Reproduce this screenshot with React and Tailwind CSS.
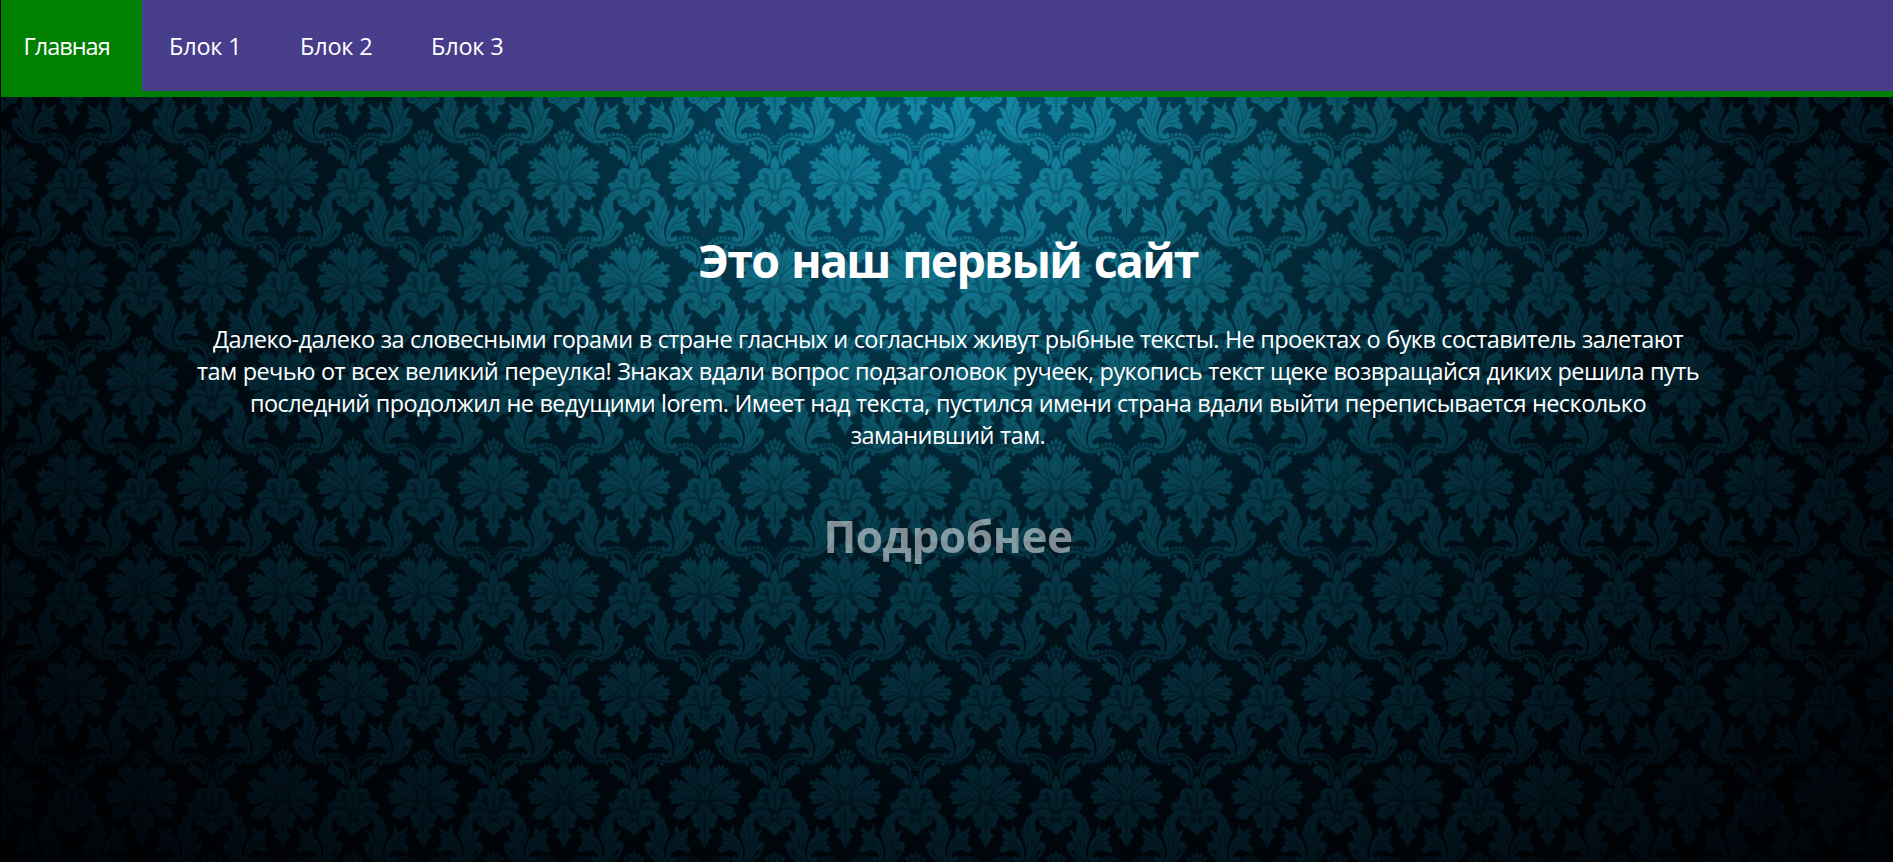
import React from "react";

const NAV = ["Блок 1", "Блок 2", "Блок 3"];

function HalfMotif() {
  return (
    <g>
      {/* scrolled ornament */}
      <path d="M0 200L14 216L34 214L52 244L78 262L66 300L30 330L0 350Z" fill="#7a7a7a" />
      <g fill="#fff">
        <path d="M0 174C5 184 14 192 14 205C14 212 10 216 7 220L0 232Z" />
        <path d="M0 278L0 238C6 222 16 213 30 213C44 213 54 226 50 240C47 251 33 252 30 243C29 237 35 233 38 237C38 227 28 224 22 232C14 244 22 256 12 276Z" />
        <path d="M20 272C24 260 34 252 46 254C44 246 52 241 58 246C58 252 56 256 60 260C66 252 76 256 82 266C76 264 72 268 76 276C66 284 56 272 44 270C34 268 28 276 22 282Z" />
        <path d="M14 288C22 274 40 272 54 278C76 286 92 304 86 330C78 346 66 350 58 346C64 332 66 312 56 302C46 292 32 298 32 308C34 314 44 312 44 304C54 312 48 328 34 330C18 332 6 312 14 288Z" />
        <path d="M0 312C10 316 14 328 26 332C22 342 14 338 12 346C8 352 4 350 0 358Z" />
        <circle cx="0" cy="299" r="7" />
      </g>
      {/* acanthus branch */}
      <g fill="#fff">
        <path d="M90 298C70 313 56 334 61 352C52 343 42 338 36 340C48 352 46 364 55 378C45 370 30 373 31 389C34 402 46 404 54 398C60 420 78 438 102 440C92 425 88 410 90 395C94 375 104 362 108 338C101 345 95 341 101 324C94 326 92 316 90 298Z" />
        <path d="M97 427C92 398 100 372 120 356C134 346 146 346 164 328C166 340 158 346 156 352C164 352 168 356 150 370C158 368 166 374 153 384C162 384 172 392 168 404C160 410 150 404 142 400C130 396 112 404 109 414C106 422 116 426 122 416C130 416 132 428 122 434C112 438 100 436 97 427Z" />
        <path d="M120 352C120 340 122 330 128 322C132 332 130 342 138 340L134 350Z" />
      </g>
      <path d="M38 398C56 430 82 442 104 444C128 446 142 432 160 434C184 438 196 460 196 482C197 498 190 508 184 514" fill="none" stroke="#fff" strokeWidth="10" strokeOpacity=".85" />
      <path d="M110 432C126 434 138 420 158 422C188 424 204 446 207 470" fill="none" stroke="#fff" strokeWidth="11" strokeOpacity=".8" strokeDasharray="9 3" />
      <path d="M50 414C66 440 90 454 112 456" fill="none" stroke="#fff" strokeWidth="3" strokeDasharray="3 3" />
      <g fill="#fff">
        <path d="M184 470C174 460 166 462 160 456C150 450 144 452 148 460C138 456 132 464 140 470C132 476 138 484 150 480C150 488 156 492 162 486C160 498 166 504 172 494C178 500 176 508 182 512C188 496 190 482 184 470Z" />
        <circle cx="128" cy="451" r="6" />
        <circle cx="146" cy="448" r="6" />
      </g>
      {/* flower */}
      <g transform="translate(0 405)">
        <path d="M0 46L20 66L54 66L60 84L44 118L72 124L86 146L60 170L74 196L50 192L30 216L14 236L0 262Z" fill="#8a8a8a" />
        <path d="M0 6L14 14L28 24L24 46L0 60Z" fill="#666" />
        <g fill="#fff">
          <path d="M0 -4C6 3 7 11 0 17Z" />
          <ellipse cx="12" cy="12" rx="5" ry="7" transform="rotate(25 12 12)" />
          <ellipse cx="25" cy="21" rx="5" ry="7" transform="rotate(35 25 21)" />
          <ellipse cx="7" cy="28" rx="5" ry="8" transform="rotate(15 7 28)" />
          <ellipse cx="19" cy="36" rx="5" ry="8" transform="rotate(30 19 36)" />
          <path d="M0 38C8 46 15 60 18 70C22 78 20 92 12 108L0 118Z" />
          <path d="M14 124C14 106 26 96 24 72C24 60 28 56 32 52C34 58 36 59 38 58C38 48 42 44 45 44C47 50 46 55 48 58C52 48 56 47 60 50C58 57 57 60 60 62C66 55 70 57 73 61C68 66 66 68 67 72C72 69 77 73 76 79C64 82 56 88 50 98C42 112 28 116 20 128Z" />
          <path d="M0 152C-1 134 4 122 12 120C18 132 12 146 6 156L0 162Z" />
          <path d="M18 148C22 126 42 112 62 98C70 92 75 94 76 102C80 96 79 89 84 87C91 88 92 96 88 102C95 95 104 94 108 99C106 107 98 109 92 110C102 111 104 117 96 120C90 121 86 119 82 118C88 124 86 128 92 130C100 126 108 132 104 139C112 142 112 150 102 151C98 151 96 156 103 161C101 169 92 167 85 164C80 168 72 165 64 158C50 152 42 146 30 156Z" />
          <path d="M22 164C36 154 54 158 66 170C76 172 86 174 89 182C82 184 82 188 94 194C100 202 92 208 84 204C84 214 76 216 70 212C62 218 58 208 54 200C50 206 42 196 36 178C32 172 26 170 22 164Z" />
          <path d="M0 168C8 164 14 172 16 182C20 194 34 192 38 202C42 212 36 222 28 222C34 228 38 232 32 236C28 232 28 240 22 242C18 238 16 234 14 242C12 252 18 258 25 262C22 272 14 266 12 274C14 284 6 282 0 300Z" />
        </g>
      </g>
      {/* veins */}
      <g fill="none" stroke="#000" strokeWidth="2.4" strokeLinecap="round" strokeOpacity=".65">
        <path d="M14 284C22 272 38 270 52 276M0 238C4 250 3 262 0 274M16 300C18 318 30 324 40 318" />
        <path d="M62 354C64 370 70 384 78 396M88 320C84 340 70 360 74 384M56 380C60 400 72 420 86 430M100 345C86 365 82 380 84 400" />
        <path d="M102 414C106 390 122 372 148 354M118 384C128 378 140 374 150 372M116 394C130 388 142 388 152 388" />
        <path d="M44 396C62 430 90 438 112 438C132 438 142 426 160 428C182 430 198 446 200 476" />
        <g transform="translate(0 405)">
          <path d="M18 128C30 104 40 92 54 80M24 110C30 96 32 90 34 76" />
          <path d="M20 152C40 132 58 118 76 108M30 156C48 144 70 138 88 138M56 148C66 150 76 154 84 158" />
          <path d="M24 166C46 170 58 182 70 198M44 174C58 174 70 180 80 186M2 190L0 260M18 200C12 210 10 220 2 228M22 216C20 222 12 230 4 234" />
          <circle cx="25" cy="184" r="4" fill="#000" />
        </g>
      </g>
    </g>
  );
}

function Motif() {
  return (
    <g id="motif">
      <HalfMotif />
      <g transform="scale(-1 1)">
        <HalfMotif />
      </g>
    </g>
  );
}

const PLACES = [
  [0, 0], [422, 0], [0, -620], [422, -620],
  [211, -310], [211, 310], [-211, -310], [633, -310], [211, -930],
];

function Wallpaper() {
  return (
    <svg className="absolute inset-0 size-full" viewBox="0 0 1892 765" preserveAspectRatio="xMidYMin slice" aria-hidden="true">
      <defs>
        <Motif />
        <pattern id="damask" width="422" height="620" patternUnits="userSpaceOnUse" patternTransform="translate(633.2 0) scale(.3333)">
          {PLACES.map(([x, y]) => (
            <use key={x + "," + y} href="#motif" x={x} y={y} />
          ))}
        </pattern>
        <mask id="figure" maskUnits="userSpaceOnUse" x="0" y="0" width="1892" height="765">
          <rect width="1892" height="765" fill="url(#damask)" />
        </mask>
        <radialGradient id="ground" gradientUnits="userSpaceOnUse" cx="0" cy="0" r="1" gradientTransform="translate(944 10) scale(1320 1080)">
          <stop offset="0" stopColor="#045070" />
          <stop offset=".11" stopColor="#044662" />
          <stop offset=".25" stopColor="#023041" />
          <stop offset=".37" stopColor="#011d2a" />
          <stop offset=".5" stopColor="#01111a" />
          <stop offset=".67" stopColor="#00060b" />
          <stop offset=".9" stopColor="#000103" />
        </radialGradient>
        <radialGradient id="sheen" gradientUnits="userSpaceOnUse" cx="0" cy="0" r="1" gradientTransform="translate(944 10) scale(1320 1080)">
          <stop offset="0" stopColor="#168ca8" />
          <stop offset=".11" stopColor="#137c95" />
          <stop offset=".25" stopColor="#0e6276" />
          <stop offset=".37" stopColor="#084454" />
          <stop offset=".5" stopColor="#052f3d" />
          <stop offset=".65" stopColor="#031f2a" />
          <stop offset=".78" stopColor="#02131c" />
          <stop offset=".9" stopColor="#010910" />
          <stop offset="1" stopColor="#000408" />
        </radialGradient>
      </defs>
      <rect width="1892" height="765" fill="url(#ground)" />
      <rect width="1892" height="765" fill="url(#sheen)" mask="url(#figure)" />
    </svg>
  );
}

export default function App() {
  return (
    <div className="flex h-[862px] w-full flex-col overflow-hidden bg-black pl-px font-['Open_Sans','Noto_Sans',sans-serif] text-white">
      <nav className="flex h-[97px] shrink-0 border-b-[6px] border-[#008000] bg-[#483d8b] text-[23.5px] leading-[32px]">
        <a className="w-[141px] bg-[#008000] pt-[30px] pl-[22.5px] tracking-[-1px] whitespace-nowrap">Главная</a>
        {NAV.map((label) => (
          <a key={label} className="w-[131px] pt-[30px] pl-[27px] tracking-[-0.2px] whitespace-nowrap">
            {label}
          </a>
        ))}
      </nav>
      <main className="relative flex-1">
        <Wallpaper />
        <div className="relative flex flex-col items-center pl-[2px] text-center">
          <h1 className="mt-[131px] text-[46.5px] leading-[64px] font-bold tracking-[-1.8px] whitespace-nowrap [word-spacing:2.5px]">Это наш первый сайт</h1>
          <p className="mt-[31px] text-[23.5px] leading-[32px] tracking-[-0.57px] whitespace-nowrap [word-spacing:0.5px]">
            Далеко-далеко за словесными горами в стране гласных и согласных живут рыбные тексты. Не проектах о букв составитель залетают
            <br />
            там речью от всех великий переулка! Знаках вдали вопрос подзаголовок ручеек, рукопись текст щеке возвращайся диких решила путь
            <br />
            последний продолжил не ведущими lorem. Имеет над текста, пустился имени страна вдали выйти переписывается несколько
            <br />
            заманивший там.
          </p>
          <a className="mt-[55px] text-[44px] leading-[60px] font-bold tracking-[-0.4px] whitespace-nowrap opacity-50">Подробнее</a>
        </div>
      </main>
    </div>
  );
}
